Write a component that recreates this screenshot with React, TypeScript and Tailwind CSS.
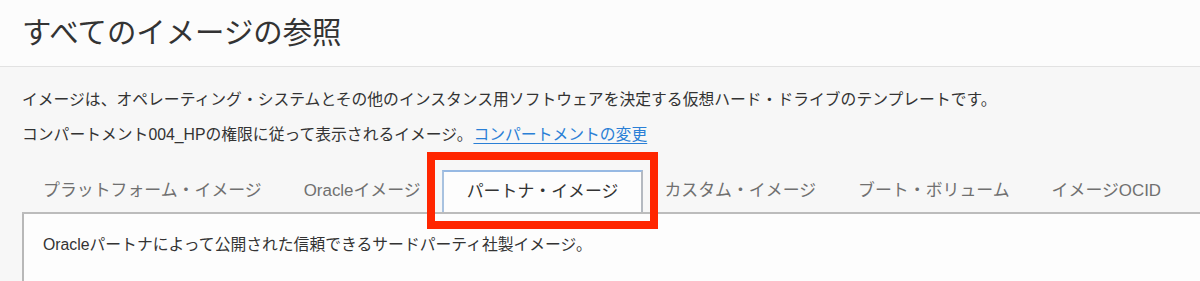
const tabs = [
  "プラットフォーム・イメージ",
  "Oracleイメージ",
  "パートナ・イメージ",
  "カスタム・イメージ",
  "ブート・ボリューム",
  "イメージOCID",
];

const ACTIVE = 2;

function Tab({ label, active }: { label: string; active: boolean }) {
  if (!active) {
    return (
      <div className="flex h-[42px] items-center px-[21px] text-[16.9px] text-[#707070] whitespace-nowrap">
        {label}
      </div>
    );
  }
  return (
    <div className="relative">
      <div className="flex h-[42px] items-center border-2 border-b-0 border-t-[#97b9e3] border-l-[#a8c2e0] border-r-[#b4b9c0] bg-[#fdfdfd] px-[23px] text-[16.9px] text-[#333] whitespace-nowrap">
        {label}
      </div>
      {/* annotation box */}
      <div className="pointer-events-none absolute -left-[15px] -right-[15px] -top-[18px] -bottom-[17px] border-8 border-[#ff2600]" />
    </div>
  );
}

export default function App() {
  return (
    <div
      className="h-[281px] w-[1200px] overflow-hidden bg-[#f7f7f7]"
      style={{ fontFamily: '"Liberation Sans", "Noto Sans CJK JP", sans-serif' }}
    >
      <header className="flex h-[67px] items-center border-b border-[#e2e2e2] bg-[#fcfcfc] pl-[22px]">
        <h1 className="text-[29.4px] font-normal leading-none text-[#333]">すべてのイメージの参照</h1>
      </header>

      <div className="pl-[22px] pt-[23px]">
        <p className="text-[15.8px] leading-[20px] text-[#333] whitespace-nowrap">
          イメージは、オペレーティング・システムとその他のインスタンス用ソフトウェアを決定する仮想ハード・ドライブのテンプレートです。
        </p>
        <p className="mt-[15px] text-[15.8px] leading-[20px] text-[#333] whitespace-nowrap">
          コンパートメント004_HPの権限に従って表示されるイメージ。
          <a href="#" className="ml-[1px] text-[#2a7fd6] underline underline-offset-[3px]">
            コンパートメントの変更
          </a>
        </p>

        <div className="mt-[25px] flex border-b-2 border-[#bcbcbc]">
          {tabs.map((t, i) => (
            <Tab key={t} label={t} active={i === ACTIVE} />
          ))}
        </div>

        <div className="h-[80px] border-l-2 border-[#b8b8b8] bg-[#fdfdfd] pl-[19px] pt-[21px]">
          <p className="text-[15.8px] leading-[20px] text-[#333]">
            Oracleパートナによって公開された信頼できるサードパーティ社製イメージ。
          </p>
        </div>
      </div>
    </div>
  );
}
